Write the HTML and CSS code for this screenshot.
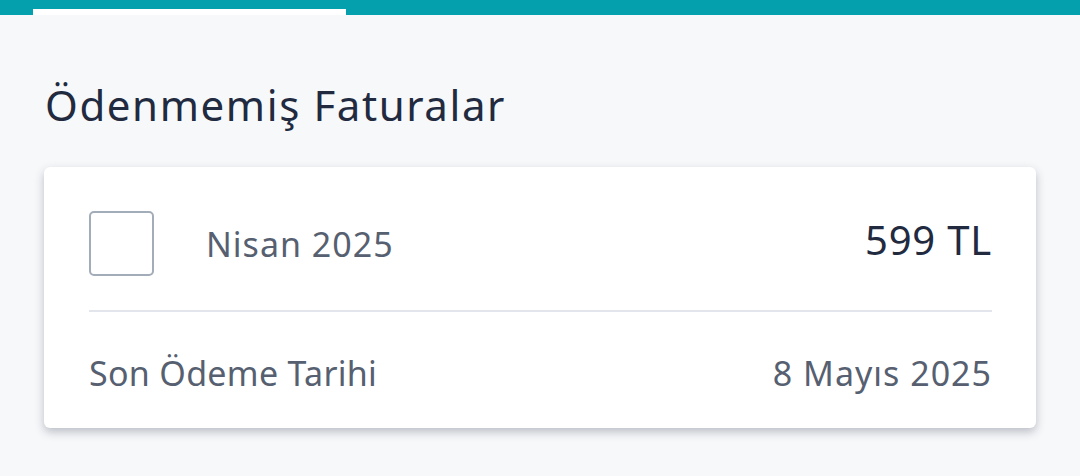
FILE: index.html
```html
<!DOCTYPE HTML>
<html>

<head>
  <title>Ödenmemiş Faturalar</title>
  <meta name="viewport" content="width=device-width, initial-scale=1">
  <link rel="stylesheet" href="styles.css">
</head>

<body>
  <div class="topnav">
    <div class="tab"></div>
  </div>
  <div class="content">
    <h1>Ödenmemiş Faturalar</h1>
    <div class="card">
      <div class="row main">
        <span class="checkbox"></span>
        <span class="month">Nisan 2025</span>
        <span class="amount">599 TL</span>
      </div>
      <div class="divider"></div>
      <div class="row due">
        <span class="label">Son Ödeme Tarihi</span>
        <span class="date">8 Mayıs 2025</span>
      </div>
    </div>
  </div>
</body>

</html>
```

FILE: styles.css
```css
html {
  font-family: "Noto Sans", Lato, Arial, sans-serif;
  background-color: #f7f8fa;
}

body {
  margin: 0;
}

.topnav {
  height: 15px;
  background-color: #05a0ad;
  display: flex;
  align-items: flex-end;
  padding-left: 33px;
}

.tab {
  width: 313px;
  height: 6px;
  background-color: #fff;
}

.content {
  padding: 0 44px 48px 44px;
}

h1 {
  margin: 0;
  padding: 65px 0 0 1px;
  height: 87px;
  font-size: 42px;
  font-weight: 400;
  line-height: 50px;
  letter-spacing: 1.6px;
  color: #222a40;
}

.card {
  background-color: #fff;
  border-radius: 6px;
  box-shadow: 0 4px 10px 0 rgba(30, 40, 60, .28);
  padding: 44px 44px 0 45px;
  height: 217px;
}

.row {
  display: flex;
  align-items: center;
}

.main {
  height: 65px;
}

.checkbox {
  width: 61px;
  height: 61px;
  border: 2px solid #a3acb9;
  border-radius: 5px;
  flex: none;
}

.month {
  margin-left: 52px;
  font-size: 34px;
  letter-spacing: 1px;
  color: #566070;
}

.amount {
  margin-left: auto;
  margin-bottom: 8px;
  font-size: 40px;
  letter-spacing: 0.8px;
  color: #222a40;
}

.divider {
  height: 2px;
  background-color: #e2e5ec;
  margin-top: 34px;
}

.due {
  justify-content: space-between;
  margin-top: 38px;
  font-size: 34px;
  color: #566070;
}

.label {
  letter-spacing: 0.3px;
}

.date {
  letter-spacing: 1px;
}
```
